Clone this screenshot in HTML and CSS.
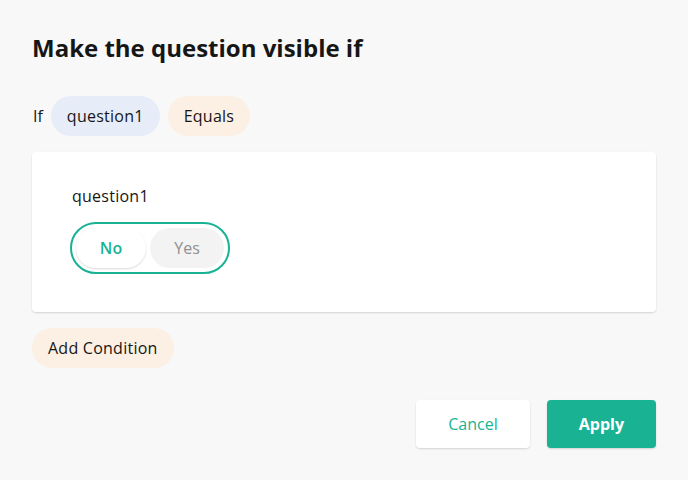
FILE: index.html
```html
<!DOCTYPE html>
<html>
<head>
<meta charset="utf-8">
<link rel="stylesheet" href="styles.css">
</head>
<body>
<div class="dialog">
  <h1 class="title">Make the question visible if</h1>
  <div class="cond-row">
    <span class="if-label">If</span>
    <span class="pill pill-blue">question1</span>
    <span class="pill pill-peach">Equals</span>
  </div>
  <div class="card">
    <div class="q-label">question1</div>
    <div class="toggle">
      <span class="opt opt-active">No</span>
      <span class="opt opt-inactive">Yes</span>
    </div>
  </div>
  <div class="add-row">
    <span class="pill pill-peach">Add Condition</span>
  </div>
  <div class="footer">
    <button class="btn btn-cancel">Cancel</button>
    <button class="btn btn-apply">Apply</button>
  </div>
</div>
</body>
</html>
```
FILE: styles.css
```css
html, body {
  margin: 0;
  padding: 0;
  background: #f8f8f8;
  font-family: "Open Sans", sans-serif;
  color: #161616;
}
.dialog {
  width: 688px;
  height: 480px;
  box-sizing: border-box;
  padding: 32px;
  display: flex;
  flex-direction: column;
}
.title {
  margin: 0;
  font-size: 24px;
  line-height: 32px;
  font-weight: 700;
}
.cond-row {
  margin-top: 32px;
  display: flex;
  align-items: center;
  gap: 8px;
  height: 40px;
}
.if-label {
  font-size: 16px;
  line-height: 24px;
  margin-left: 1px;
}
.pill {
  display: inline-block;
  padding: 8px 16px;
  font-size: 16px;
  line-height: 24px;
  letter-spacing: 0.25px;
  border-radius: 20px;
}
.pill-blue { background: #e6edf8; }
.pill-peach { background: #fbf0e3; }
.card {
  margin-top: 16px;
  background: #fff;
  border-radius: 4px;
  box-shadow: 0 1px 2px rgba(0,0,0,0.15);
  height: 160px;
  box-sizing: border-box;
  padding: 32px 38px 0;
}
.q-label {
  font-size: 16px;
  line-height: 24px;
  letter-spacing: 0.25px;
  margin-left: 2px;
}
.toggle {
  margin-top: 14px;
  display: inline-flex;
  border: 2px solid #19b394;
  border-radius: 26px;
  padding: 4px;
  gap: 4px;
}
.opt {
  height: 40px;
  line-height: 40px;
  border-radius: 20px;
  font-size: 16px;
  text-align: center;
}
.opt-active {
  width: 70px;
  background: #fff;
  color: #19b394;
  font-weight: 600;
  box-shadow: 0 1px 2px rgba(0,0,0,0.15);
}
.opt-inactive {
  width: 74px;
  background: #f3f3f3;
  color: #909090;
}
.add-row {
  margin-top: 16px;
  display: flex;
}
.footer {
  margin-top: 32px;
  display: flex;
  justify-content: flex-end;
  gap: 17px;
}
.btn {
  height: 48px;
  padding: 0 32px;
  border: none;
  border-radius: 4px;
  font-family: "Open Sans", sans-serif;
  font-size: 16px;
  cursor: pointer;
}
.btn-cancel {
  background: #fff;
  color: #19b394;
  box-shadow: 0 1px 2px rgba(0,0,0,0.15);
}
.btn-apply {
  background: #19b394;
  color: #fff;
  font-weight: 700;
  box-shadow: 0 1px 2px rgba(0,0,0,0.15);
}
```
